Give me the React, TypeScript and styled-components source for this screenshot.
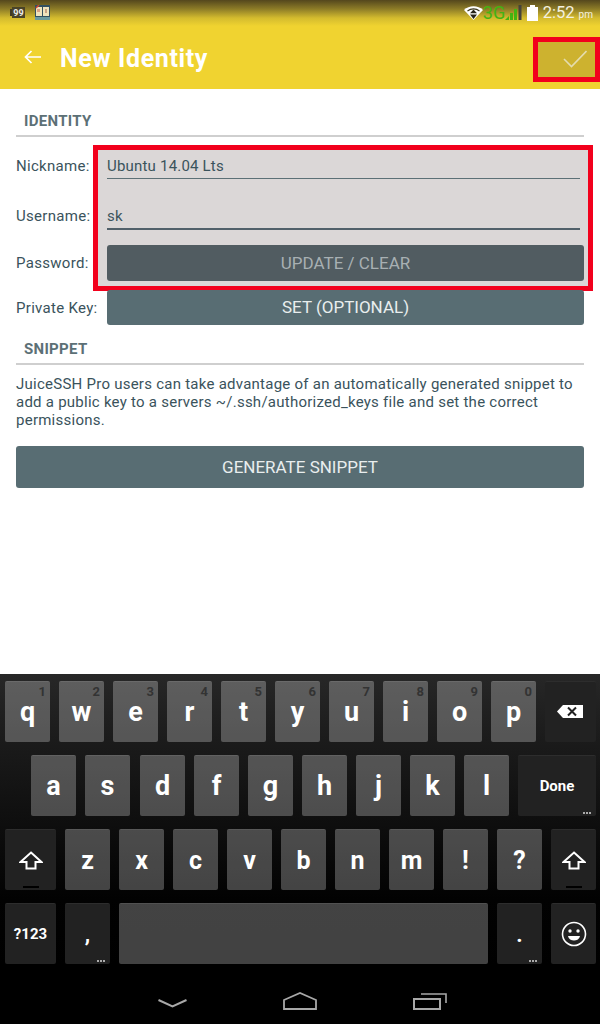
import styled, { createGlobalStyle } from 'styled-components'

const GlobalStyle = createGlobalStyle`
  html, body {
    margin: 0;
    padding: 0;
    background: #000;
  }
  * {
    box-sizing: border-box;
  }
`

const Screen = styled.div`
  width: 600px;
  height: 1024px;
  display: flex;
  flex-direction: column;
  overflow: hidden;
  background: #fff;
  font-family: Roboto, "Liberation Sans", sans-serif;
`

const Header = styled.header`
  height: 89px;
  flex: none;
  background: linear-gradient(#54471d 0, #8d7c27 9px, #d4bb2e 18px, #f0d330 26px);
`

const StatusBar = styled.div`
  height: 25px;
  display: flex;
  align-items: center;
  padding: 0 7px 0 10px;
`

const StatusLeft = styled.div`
  display: flex;
  align-items: center;
  gap: 10px;
  flex: 1;
`

const StatusRight = styled.div`
  display: flex;
  align-items: center;
`

const NetworkLabel = styled.span`
  color: #43b312;
  font-size: 18px;
  width: 20px;
  margin-right: 2px;
  white-space: nowrap;
`

const Clock = styled.span`
  color: #f4f1e0;
  font-size: 16.5px;
  margin-left: 5px;
  white-space: nowrap;

  small {
    font-size: 10px;
    margin-left: 4px;
  }
`

const AppBar = styled.div`
  height: 64px;
  display: flex;
  align-items: center;
  padding-left: 24px;
`

const BackButton = styled.div`
  width: 36px;
  height: 18px;
  display: flex;
  align-items: center;
`

const Title = styled.h1`
  flex: 1;
  margin: 2px 0 0;
  color: #fff;
  font-family: Roboto, sans-serif;
  font-size: 25px;
  font-weight: 700;
  letter-spacing: 0.6px;
`

const ActionHighlight = styled.div`
  width: 67px;
  height: 45px;
  margin-top: 4px;
  border: 5px solid #f2001c;
  background: #cdb22f;
  display: flex;
  align-items: center;
  justify-content: flex-end;
  padding-right: 8px;
`

const Content = styled.main`
  flex: 1;
  padding: 0 16px;
`

const SectionHeader = styled.h2<{ $height: number }>`
  height: ${p => p.$height}px;
  margin: 0;
  padding: 0 8px 5px;
  display: flex;
  align-items: flex-end;
  border-bottom: 2px solid #cfcfcf;
  color: #5c7076;
  font-size: 15px;
  font-weight: 700;
  letter-spacing: 0.3px;
  line-height: 18px;
`

const FormGrid = styled.div`
  display: flex;
  margin-top: 8px;
`

const LabelColumn = styled.div`
  width: 77px;
  flex: none;
`

const FieldLabel = styled.div<{ $height: number }>`
  height: ${p => p.$height}px;
  display: flex;
  align-items: center;
  color: #3a535c;
  font-size: 15px;
  letter-spacing: 0.3px;
  white-space: nowrap;
`

const Highlight = styled.div`
  flex: 1;
  height: 146px;
  margin-right: -9px;
  padding: 0 4px 0 9px;
  border: 5px solid #f2001c;
  background: #dbd7d7;
`

const TextField = styled.div<{ $height: number; $focused?: boolean }>`
  height: ${p => p.$height}px;
  margin-right: 4px;
  padding-bottom: 3px;
  display: flex;
  align-items: flex-end;
  border-bottom: ${p => (p.$focused ? '2px solid #51606a' : '1px solid #5c7076')};
  color: #3a535c;
  font-size: 15px;
  letter-spacing: 0.2px;
`

const ActionButton = styled.div<{ $height: number; $muted?: boolean }>`
  height: ${p => p.$height}px;
  display: flex;
  align-items: center;
  justify-content: center;
  border-radius: 3px;
  background: ${p => (p.$muted ? '#515c61' : '#586d73')};
  color: ${p => (p.$muted ? '#a8b0b3' : '#e9eeee')};
  font-size: 17px;
`

const UpdateButton = styled(ActionButton)`
  margin-top: 15px;
`

const KeyRow = styled.div`
  display: flex;
  align-items: center;
  margin-top: -1px;
`

const KeyRowLabel = styled(FieldLabel)`
  width: 91px;
  flex: none;
`

const KeyRowButton = styled(ActionButton)`
  flex: 1;
  padding-bottom: 2px;
`

const Paragraph = styled.p`
  margin: 10px 0 17px;
  color: #3a535c;
  font-size: 15px;
  letter-spacing: 0.25px;
  line-height: 18px;
`

const Keyboard = styled.section`
  height: 350px;
  flex: none;
  padding-top: 7px;
  display: flex;
  flex-direction: column;
  gap: 13px;
  background: linear-gradient(#272727 0, #1c1c1c 60px, #0e0e0e 150px, #020202 225px, #000 290px);
`

const Row = styled.div<{ $inset?: number }>`
  display: flex;
  gap: 9px;
  padding-left: ${p => p.$inset ?? 5}px;
`

const Key = styled.div<{ $width?: number; $fn?: boolean; $size?: number; $after?: number }>`
  position: relative;
  width: ${p => p.$width ?? 45}px;
  height: 61px;
  flex: none;
  margin-right: ${p => p.$after ?? 0}px;
  display: flex;
  align-items: center;
  justify-content: center;
  border-radius: 2px;
  border-top: 1px solid rgba(255, 255, 255, ${p => (p.$fn ? 0.05 : 0.08)});
  background: ${p => (p.$fn ? '#222222' : 'rgba(255, 255, 255, 0.26)')};
  color: #fff;
  font-size: ${p => p.$size ?? 27}px;
  font-weight: 700;
`

const Hint = styled.span`
  position: absolute;
  top: 2px;
  right: 4px;
  color: #333;
  font-size: 13px;
  font-weight: 700;
  line-height: 16px;
`

const MoreDots = styled.span`
  position: absolute;
  right: 5px;
  bottom: 2px;
  width: 8px;
  height: 2px;
  background: repeating-linear-gradient(90deg, #aaa 0 2px, transparent 2px 3px);
`

const ShiftBar = styled.span`
  position: absolute;
  bottom: 2px;
  left: 50%;
  width: 16px;
  height: 2px;
  margin-left: -8px;
  background: #000;
`

const NavBar = styled.nav`
  height: 60px;
  flex: none;
  margin-top: -13px;
  padding: 28px 0 0 158px;
  display: flex;
  align-items: flex-start;
  gap: 96px;
  background: #000;
`

const NavSlot = styled.div<{ $offset: number }>`
  display: flex;
  margin-top: ${p => p.$offset}px;
`

const BatteryGap = styled.span`
  width: 5px;
`

const rowOne = [
  ['q', '1'], ['w', '2'], ['e', '3'], ['r', '4'], ['t', '5'],
  ['y', '6'], ['u', '7'], ['i', '8'], ['o', '9'], ['p', '0'],
]
const rowTwo = ['a', 's', 'd', 'f', 'g', 'h', 'j', 'k', 'l']
const rowThree = ['z', 'x', 'c', 'v', 'b', 'n', 'm', '!', '?']

function BatteryBadge() {
  return (
    <svg width="15" height="13" viewBox="0 0 15 13">
      <rect x="0" y="3" width="2" height="7" fill="#3f3a26" />
      <rect x="2" y="1" width="13" height="11" fill="#4a4328" />
      <text x="8.5" y="10" textAnchor="middle" fontFamily="Roboto" fontSize="9" fontWeight="700" fill="#eee">99</text>
    </svg>
  )
}

function BookIcon() {
  return (
    <svg width="15" height="15" viewBox="0 0 15 15">
      <rect x="0" y="0" width="15" height="15" fill="#33505f" />
      <rect x="1" y="2" width="6" height="9" fill="#efe3bd" />
      <rect x="8" y="2" width="6" height="9" fill="#efe3bd" />
      <rect x="2" y="4" width="3" height="3" fill="#d9a184" />
      <rect x="10" y="4" width="2" height="4" fill="#c9a184" />
      <rect x="0" y="12" width="15" height="3" fill="#6b9aa0" />
      <path d="M1 3 L4 0" stroke="#d9442f" strokeWidth="1.4" />
    </svg>
  )
}

function WifiIcon() {
  return (
    <svg width="19" height="14" viewBox="0 0 19 14">
      <path d="M0 4 C5 -1 14 -1 19 4 L9.5 14 Z" fill="#fff" />
      <path d="M3.5 5 C7 2.2 12 2.2 15.5 5" fill="none" stroke="#3d3820" strokeWidth="1.1" />
      <path d="M9.5 3.5 L13 7.2 H6 Z M9.5 13 L6 8.6 H13 Z" fill="#26241a" />
    </svg>
  )
}

function SignalIcon() {
  return (
    <svg width="17" height="15" viewBox="0 0 17 15">
      <path d="M0 15 L4 11 V15 Z" fill="#43b312" />
      <rect x="5" y="8" width="3" height="7" fill="#43b312" />
      <rect x="9" y="4" width="3" height="11" fill="#43b312" />
      <rect x="13.5" y="0" width="3" height="15" fill="#45433a" />
    </svg>
  )
}

function BatteryIcon() {
  return (
    <svg width="11" height="16" viewBox="0 0 11 16">
      <rect x="3" y="0" width="5" height="2" fill="#fff" />
      <rect x="0" y="2" width="11" height="14" fill="#fff" />
    </svg>
  )
}

function BackspaceIcon() {
  return (
    <svg width="27" height="14" viewBox="0 0 27 14">
      <path d="M6 0 H26 V13 H6 L0 6.5 Z" fill="#fff" />
      <path d="M11 2.5 L19 10.5 M19 2.5 L11 10.5" stroke="#222" strokeWidth="2" />
    </svg>
  )
}

function ShiftIcon() {
  return (
    <svg width="24" height="19" viewBox="0 0 24 19" fill="none">
      <path d="M12 1.5 L22.5 11 H16.5 V17.5 H7.5 V11 H1.5 Z" stroke="#fff" strokeWidth="2" />
    </svg>
  )
}

function SmileyIcon() {
  return (
    <svg width="26" height="26" viewBox="0 0 26 26" fill="none">
      <circle cx="13" cy="13" r="11.5" stroke="#fff" strokeWidth="1.6" />
      <circle cx="9" cy="10" r="1.7" fill="#fff" />
      <circle cx="17" cy="10" r="1.7" fill="#fff" />
      <path d="M7 15 H19 C18 21 8 21 7 15 Z" fill="#fff" />
    </svg>
  )
}

function App() {
  return (
    <Screen>
      <GlobalStyle />
      <Header>
        <StatusBar>
          <StatusLeft>
            <BatteryBadge />
            <BookIcon />
          </StatusLeft>
          <StatusRight>
            <WifiIcon />
            <NetworkLabel>3G</NetworkLabel>
            <SignalIcon />
            <BatteryGap />
            <BatteryIcon />
            <Clock>2:52<small>pm</small></Clock>
          </StatusRight>
        </StatusBar>
        <AppBar>
          <BackButton>
            <svg width="17" height="14" viewBox="0 0 17 14" fill="none">
              <path d="M17 7 H1.5 M7.5 1 L1.5 7 L7.5 13" stroke="#fff" strokeWidth="1.7" />
            </svg>
          </BackButton>
          <Title>New Identity</Title>
          <ActionHighlight>
            <svg width="24" height="18" viewBox="0 0 24 18" fill="none">
              <path d="M1 9 L8.5 16.5 L23.5 1" stroke="#e4dcae" strokeWidth="1.6" />
            </svg>
          </ActionHighlight>
        </AppBar>
      </Header>

      <Content>
        <SectionHeader $height={48}>IDENTITY</SectionHeader>
        <FormGrid>
          <LabelColumn>
            <FieldLabel $height={42}>Nickname:</FieldLabel>
            <FieldLabel $height={58}>Username:</FieldLabel>
            <FieldLabel $height={36}>Password:</FieldLabel>
          </LabelColumn>
          <Highlight>
            <TextField $height={29}>Ubuntu 14.04 Lts</TextField>
            <TextField $height={51} $focused>sk</TextField>
            <UpdateButton $height={36} $muted>UPDATE / CLEAR</UpdateButton>
          </Highlight>
        </FormGrid>
        <KeyRow>
          <KeyRowLabel $height={35}>Private Key:</KeyRowLabel>
          <KeyRowButton $height={35}>SET (OPTIONAL)</KeyRowButton>
        </KeyRow>
        <SectionHeader $height={40}>SNIPPET</SectionHeader>
        <Paragraph>
          JuiceSSH Pro users can take advantage of an automatically generated snippet to
          add a public key to a servers ~/.ssh/authorized_keys file and set the correct
          permissions.
        </Paragraph>
        <ActionButton $height={42}>GENERATE SNIPPET</ActionButton>
      </Content>

      <Keyboard>
        <Row>
          {rowOne.map(([letter, digit]) => (
            <Key key={letter}>
              <Hint>{digit}</Hint>
              {letter}
            </Key>
          ))}
          <Key $fn $width={51}><BackspaceIcon /></Key>
        </Row>
        <Row $inset={31}>
          {rowTwo.map(letter => (
            <Key key={letter} $after={letter === 's' ? 1 : 0}>{letter}</Key>
          ))}
          <Key $fn $width={78} $size={15}>
            Done
            <MoreDots />
          </Key>
        </Row>
        <Row>
          <Key $fn $width={51}>
            <ShiftIcon />
            <ShiftBar />
          </Key>
          {rowThree.map(letter => (
            <Key key={letter} $size={25}>{letter}</Key>
          ))}
          <Key $fn $width={45}>
            <ShiftIcon />
            <ShiftBar />
          </Key>
        </Row>
        <Row>
          <Key $fn $width={51} $size={15}>?123</Key>
          <Key $fn $size={22}>
            ,
            <MoreDots />
          </Key>
          <Key $width={369} />
          <Key $fn $size={22}>
            .
            <MoreDots />
          </Key>
          <Key $fn><SmileyIcon /></Key>
        </Row>
        <NavBar>
          <NavSlot $offset={7}>
            <svg width="29" height="9" viewBox="0 0 29 9" fill="none">
              <path d="M0.5 1 L14.5 7.5 L28.5 1" stroke="#a8a8a8" strokeWidth="2" />
            </svg>
          </NavSlot>
          <NavSlot $offset={0}>
            <svg width="34" height="18" viewBox="0 0 34 18" fill="none">
              <path d="M1 17 V8 L17 1 L33 8 V17 Z" stroke="#a8a8a8" strokeWidth="1.8" />
            </svg>
          </NavSlot>
          <NavSlot $offset={1}>
            <svg width="34" height="17" viewBox="0 0 34 17" fill="none">
              <rect x="1" y="6" width="26" height="10" stroke="#a8a8a8" strokeWidth="2" />
              <path d="M8 1 H33 V10" stroke="#a8a8a8" strokeWidth="1.6" />
            </svg>
          </NavSlot>
        </NavBar>
      </Keyboard>
    </Screen>
  )
}

export default App
